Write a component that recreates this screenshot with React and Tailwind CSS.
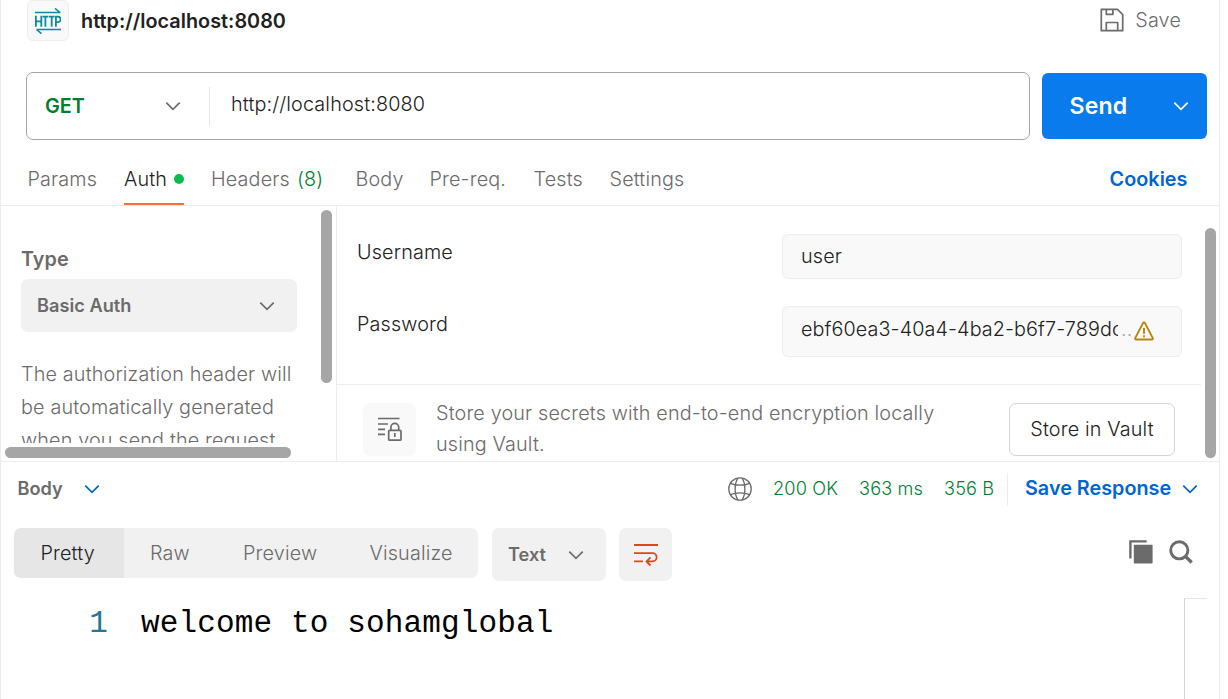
import React from "react";

function Chevron({ className = "" }) {
  return (
    <svg className={`h-[10px] w-[16px] shrink-0 ${className}`} viewBox="0 0 16 10" fill="none" stroke="currentColor" strokeWidth="1.7">
      <path d="M1.3 1.6 8 8.3l6.700-6.700" />
    </svg>
  );
}

function HttpIcon() {
  return (
    <svg className="h-[26px] w-[26px]" viewBox="0 0 26 26" fill="none" stroke="#0f8a9d" strokeWidth="1.6">
      <path d="M0 4.500h25.500M20 .4l5 4.100M26 21.500H1.500M6.500 25.700l-5-4.200" />
      <path d="M.9 7.800v11M6.300 7.800v11M.9 13.300h5.400M7.600 8.600h5.700M10.400 8.600v10.200M13.900 8.600h5.700M16.700 8.600v10.200M20.900 18.800V8.600h1.900a2.800 2.800 0 0 1 0 5.600h-1.900" strokeWidth="1.800" />
    </svg>
  );
}

function SaveIcon() {
  return (
    <svg className="h-[24px] w-[24px]" viewBox="0 0 24 24" fill="none" stroke="#6b6b6b" strokeWidth="1.7">
      <path d="M1.300 1.300h16.200l5.200 5.200v16.200H1.300zM6.300 1.300v5h6.600v-5M6.300 22.700v-8.200h11.400v8.200" strokeLinejoin="round" />
    </svg>
  );
}

function VaultIcon() {
  return (
    <svg className="h-[26px] w-[26px]" viewBox="0 0 26 26" fill="none" stroke="#6b6b6b" strokeWidth="1.700">
      <path d="M1 2.500h21.500M1 8h10M1 13.300h7M1 18.300h7" />
      <rect x="11.700" y="14.300" width="12.300" height="9.900" rx="1" />
      <path d="M13.900 14.300v-3a3.900 3.900 0 0 1 7.800 0v3M17.800 17v4" />
    </svg>
  );
}

function GlobeIcon() {
  return (
    <svg className="h-[24px] w-[24px] shrink-0" viewBox="0 0 24 24" fill="none" stroke="#6b6b6b" strokeWidth="1.300">
      <circle cx="12" cy="12" r="11.200" />
      <path d="M9.800 1C6.200 7 6.200 17 9.800 23M14.200 1c3.600 6 3.600 16 0 22M2.500 6.300c5.500 2.500 13.500 2.500 19 0M2.500 17.700c5.500-2.500 13.500-2.500 19 0" />
    </svg>
  );
}

function WarningIcon() {
  return (
    <svg className="h-[20px] w-[20px]" viewBox="0 0 20 20" fill="none" stroke="#b8860b" strokeWidth="1.900" strokeLinejoin="round">
      <path d="M9 2.100a1.150 1.150 0 0 1 2 0l7.800 15c.35.75-.1 1.400-.9 1.400H2.100c-.8 0-1.250-.65-.9-1.400zM10 7v5.800M10 14.300v2" />
    </svg>
  );
}

function WrapIcon() {
  return (
    <svg className="h-[24px] w-[26px]" viewBox="0 0 26 24" fill="none" stroke="#dd4814" strokeWidth="1.800">
      <path d="M1 2h24M1 10.200h18.500a4 4 0 0 1 0 8.200h-5.500M1 18.400h9M17.500 14.300l-4 4.100 4 4.100" />
    </svg>
  );
}

function CopyIcon() {
  return (
    <svg className="h-[24px] w-[24px]" viewBox="0 0 24 24">
      <path d="M1.400 18.500V1.400h16.200" fill="none" stroke="#6b6b6b" strokeWidth="2.400" />
      <rect x="4.800" y="4.800" width="18.800" height="18.800" rx="1" fill="#6b6b6b" />
    </svg>
  );
}

function SearchIcon() {
  return (
    <svg className="h-[24px] w-[24px]" viewBox="0 0 24 24" fill="none" stroke="#6b6b6b" strokeWidth="2.900">
      <circle cx="10.300" cy="10.300" r="8.600" />
      <path d="M16.500 16.500l6.200 6" strokeWidth="3.200" />
    </svg>
  );
}

function Tab({ className, children }) {
  return <div className={`flex h-full items-center text-[#6b6b6b] ${className}`}>{children}</div>;
}

export default function App() {
  return (
    <div className="h-[699px] w-[1228px] overflow-hidden bg-white font-['Inter',sans-serif] text-[19.8px] leading-[26px] font-[365] tracking-[0.15px] whitespace-nowrap text-[#212121]">
      <div className="flex h-full w-[1220px] flex-col border-x border-[#ededed]">
        <header className="flex h-[72px] shrink-0 items-start pl-[26px]">
          <div className="flex h-[41px] w-[42px] items-center justify-center rounded-[6px] border border-[#ededed] bg-[#f9f9f9]">
            <HttpIcon />
          </div>
          <h1 className="ml-3 flex h-[41px] items-center font-semibold tracking-[0.03px]">http://localhost:8080</h1>
          <div className="mr-[38px] ml-auto flex h-10 items-center text-[#6b6b6b]">
            <SaveIcon />
            <span className="ml-[11px]">Save</span>
          </div>
        </header>

        <div className="flex h-[68px] shrink-0 pl-[25px]">
          <div className="flex w-[1004px] items-center rounded-[7px] border border-[#a6a6a6]">
            <div className="flex w-[182px] items-center justify-between pr-7 pl-[18px] text-[#6b6b6b]">
              <span className="font-semibold tracking-[0.03px] text-[#007f31]">GET</span>
              <Chevron />
            </div>
            <div className="h-[39px] w-px bg-[#e6e6e6]" />
            <span className="pb-1 pl-[21px]">http://localhost:8080</span>
          </div>
          <button className="mt-px ml-3 flex h-[66px] w-[165px] items-center justify-between rounded-[6px] bg-[#097bed] pr-[18px] pl-[27.5px] text-white">
            <span className="text-[23.1px] font-semibold">Send</span>
            <Chevron />
          </button>
        </div>

        <nav className="flex h-[66px] shrink-0 border-b border-[#ededed] pt-[13px] pl-[26.5px]">
          <Tab className="w-[96.5px]">Params</Tab>
          <div className="mr-[27px] flex h-[52px] w-[60px] items-center justify-between border-b-2 border-[#ff6c37] pt-[2px]">
            <span>Auth</span>
            <span className="size-[10px] rounded-full bg-[#0cbb52]" />
          </div>
          <Tab className="w-[144.500px]">
            Headers<span className="ml-[7px] text-[#007f31]">(8)</span>
          </Tab>
          <Tab className="w-[74px]">Body</Tab>
          <Tab className="w-[104px]">Pre-req.</Tab>
          <Tab className="w-[76px]">Tests</Tab>
          <Tab className="w-[80px]">Settings</Tab>
          <div className="mr-[31.500px] ml-auto flex items-center font-semibold tracking-[0.03px] text-[#0265d2]">Cookies</div>
        </nav>

        <main className="flex h-[256px] shrink-0 border-b border-[#ededed]">
          <aside className="flex w-[336px] flex-col border-r border-[#ededed] pt-1">
            <div className="flex h-[233px] justify-between pr-1 pl-5">
              <div className="flex w-[290px] flex-col overflow-hidden pt-9 text-[#6b6b6b]">
                <span className="font-semibold tracking-[0.03px]">Type</span>
                <div className="mt-[7px] flex h-[53px] w-[276px] shrink-0 items-center justify-between rounded-[7px] bg-[#f1f1f1] pr-[22px] pl-4">
                  <span className="pb-[2px] text-[18.15px] font-semibold tracking-[0.03px]">Basic Auth</span>
                  <Chevron />
                </div>
                <p className="mt-[26px] h-[87px] overflow-hidden leading-[33px]">
                  The authorization header will
                  <br />
                  be automatically generated
                  <br />
                  when you send the request.
                </p>
              </div>
              <div className="h-[173px] w-[11px] rounded-full bg-[#a6a6a6]" />
            </div>
            <div className="mt-1 ml-1 h-[11px] w-[286px] rounded-full bg-[#a6a6a6]" />
          </aside>

          <section className="flex grow">
            <div className="flex w-[864px] flex-col">
              <div className="flex h-[179px] flex-col border-b border-[#ededed] pt-7 pl-5">
                <div className="flex h-[45px]">
                  <span className="w-[425px] pt-[5px]">Username</span>
                  <div className="flex w-[400px] items-center rounded-[6px] border border-[#ededed] bg-[#f9f9f9] pb-[2px] pl-[18px]">user</div>
                </div>
                <div className="mt-[27px] flex h-[51px]">
                  <span className="w-[425px] pt-[5px]">Password</span>
                  <div className="flex w-[400px] items-center rounded-[6px] border border-[#ededed] bg-[#f9f9f9] pb-[5px] pl-[18px]">
                    <span className="w-[317px] overflow-hidden tracking-[0.1px]">ebf60ea3-40a4-4ba2-b6f7-789dc</span>
                    <span className="w-4 overflow-hidden pl-[3px] text-[#a6a6a6]">...</span>
                    <span className="pt-1">
                      <WarningIcon />
                    </span>
                  </div>
                </div>
              </div>
              <div className="flex pt-[18px] pl-[26px]">
                <div className="flex size-[53px] items-center justify-center rounded-[7px] bg-[#f9f9f9] pb-[2px]">
                  <VaultIcon />
                </div>
                <p className="-mt-[5px] ml-5 w-[573px] leading-[31px] text-[#6b6b6b]">
                  Store your secrets with end-to-end encryption locally
                  <br />
                  using Vault.
                </p>
                <button className="flex h-[53px] w-[166px] items-center justify-center rounded-[7px] border border-[#d4d4d4] pb-[2px]">Store in Vault</button>
              </div>
            </div>
            <div className="mt-[22px] ml-1 h-[230px] w-[11px] rounded-full bg-[#a6a6a6]" />
          </section>
        </main>

        <div className="flex h-[54px] shrink-0 items-center pr-[21px] pl-[16.5px] text-[18.15px]">
          <span className="w-[66.5px] pb-[2px] font-semibold tracking-[0.03px] text-[#6b6b6b]">Body</span>
          <Chevron className="text-[#0265d2]" />
          <div className="ml-auto flex items-center text-[#007f31]">
            <GlobeIcon />
            <span className="ml-[21px] w-[86px] pb-[2px]">200 OK</span>
            <span className="w-[85px] pb-[2px]">363 ms</span>
            <span className="w-[63px] pb-[2px]">356 B</span>
          </div>
          <div className="h-[33px] w-px bg-[#ededed]" />
          <div className="ml-[17px] flex items-center text-[19.8px] font-semibold tracking-[0px] text-[#0265d2]">
            <span className="w-[157px] pb-[2px]">Save Response</span>
            <Chevron />
          </div>
        </div>

        <div className="flex h-[82px] shrink-0 items-start pt-3 pr-[26px] pl-[13px] text-[#6b6b6b]">
          <div className="flex h-[50px] w-[464px] items-center overflow-hidden rounded-[7px] bg-[#f1f1f1]">
            <div className="flex h-full w-[110px] items-center bg-[#e6e6e6] pl-[26.5px] text-[#212121]">Pretty</div>
            <span className="w-[93px] pl-[26px]">Raw</span>
            <span className="w-[127px] pl-[26px]">Preview</span>
            <span className="pl-[25.5px]">Visualize</span>
          </div>
          <div className="ml-[14px] flex h-[53px] w-[114px] items-center justify-between rounded-[7px] bg-[#f1f1f1] pr-[22px] pl-4">
            <span className="pb-px text-[18.15px] font-semibold tracking-[0.03px]">Text</span>
            <Chevron />
          </div>
          <div className="ml-[13px] flex size-[53px] items-center justify-center rounded-[7px] bg-[#f1f1f1] pt-px">
            <WrapIcon />
          </div>
          <div className="mt-3 ml-auto flex gap-4">
            <CopyIcon />
            <SearchIcon />
          </div>
        </div>

        <div className="flex grow">
          <div className="flex w-[1183px] pt-[6px] font-['Liberation_Mono',monospace] text-[31px] leading-[40px] tracking-[0.15px] text-black">
            <span className="w-[107px] text-right text-[#237893]">1</span>
            <span className="pl-[33px]">welcome to sohamglobal</span>
          </div>
          <div className="w-[23px] border-t border-l border-t-[#e6e6e6] border-l-[#d4d4d4]" />
        </div>
      </div>
    </div>
  );
}
